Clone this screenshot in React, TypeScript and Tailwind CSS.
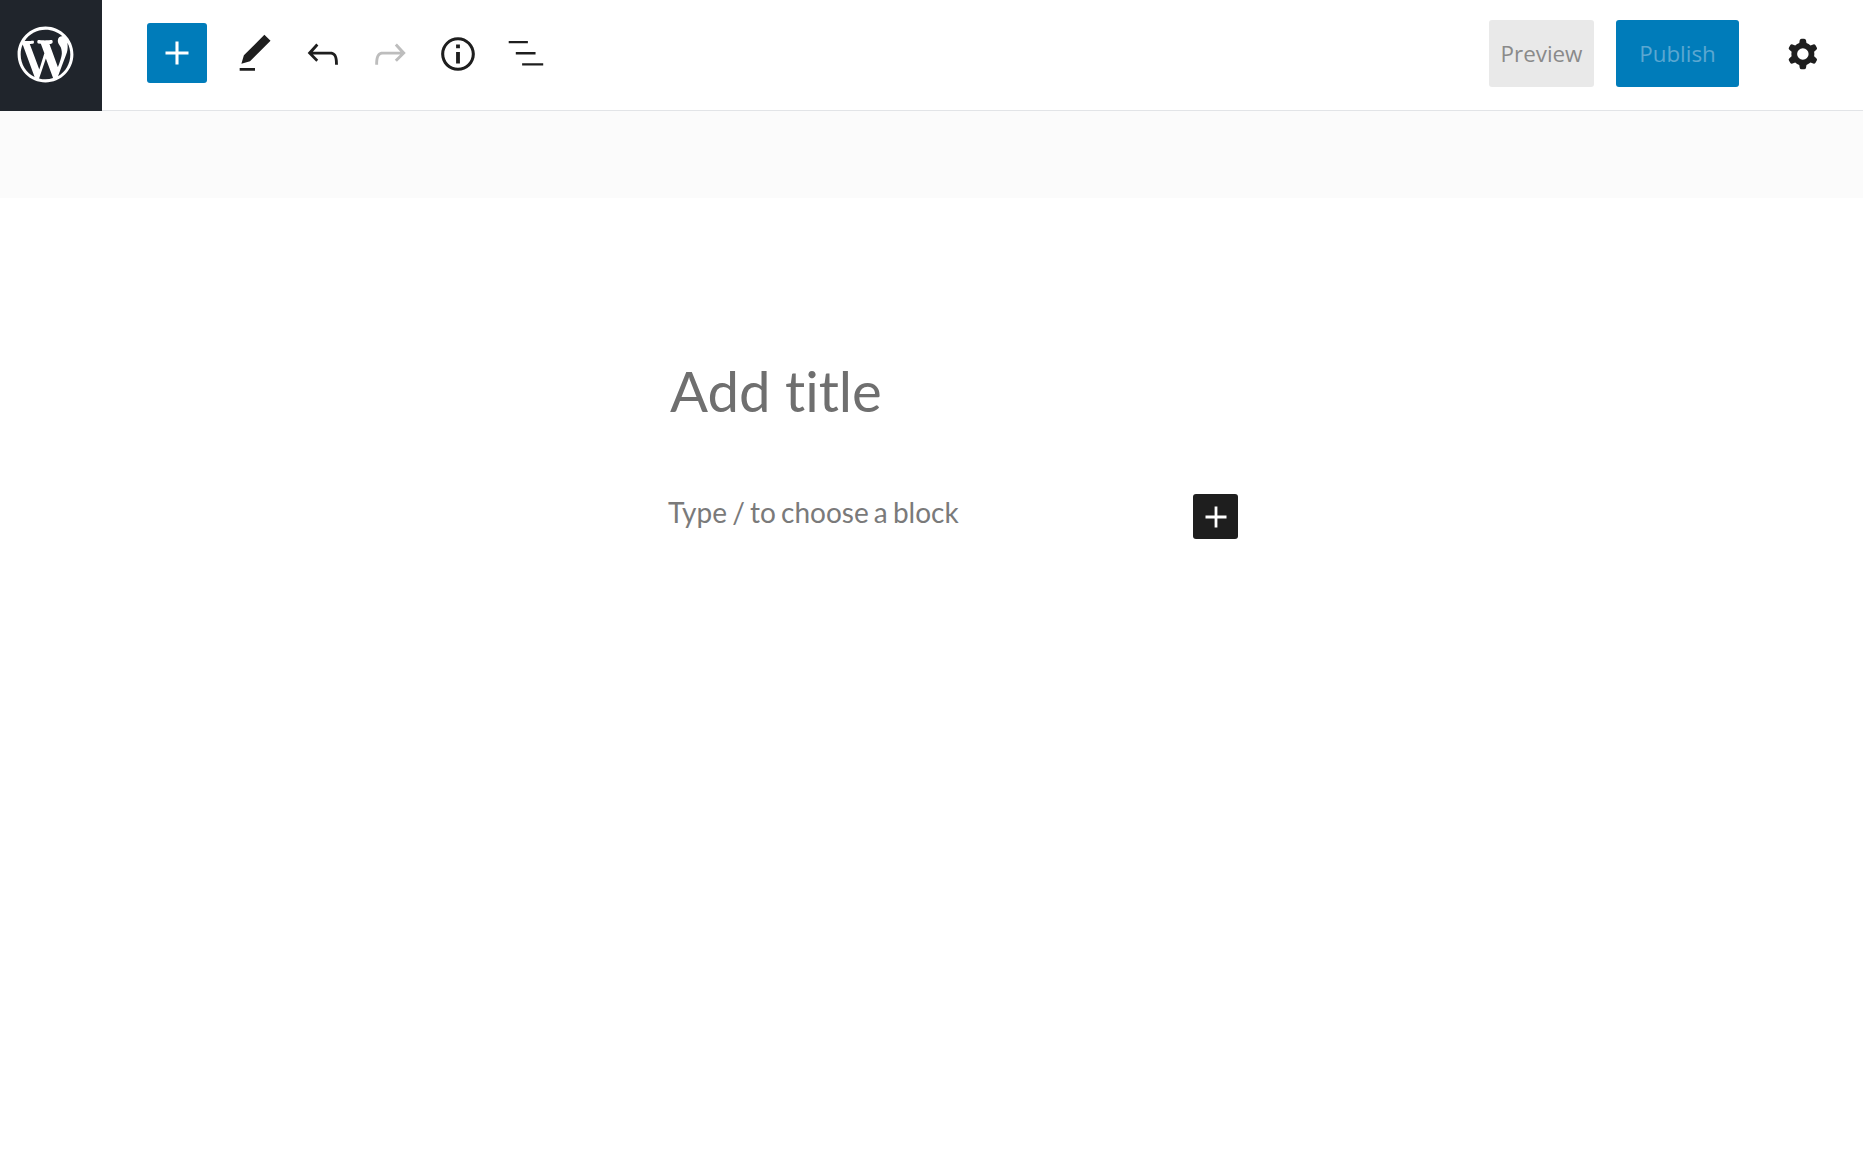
const pencil = 'M20.1 5.1L16.9 2 6.2 12.7l-1.3 4.4 4.5-1.3L20.1 5.1zM4 20.8h8v-1.5H4v1.5z';
const undo = 'M18.3 11.7c-.6-.6-1.4-.9-2.3-.9H6.7l2.9-3.3-1.1-1-4.5 5L8.5 16l1-1-2.7-2.7H16c.5 0 .9.2 1.3.5 1 1 1 3.4 1 4.5v.3h1.5v-.2c0-1.5 0-4.3-1.5-5.7z';
const redo = 'M15.6 6.5l-1.1 1 2.9 3.3H8c-.9 0-1.7.3-2.3.9-1.4 1.5-1.4 4.2-1.4 5.7v.2h1.5v-.3c0-1.1 0-3.5 1-4.5.3-.3.7-.5 1.3-.5h9.2L14.5 15l1.1 1.1 4.6-4.6-4.6-5z';
const info = 'M12 3.2c-4.8 0-8.8 3.9-8.8 8.8 0 4.8 3.9 8.8 8.8 8.8 4.8 0 8.8-3.9 8.8-8.8 0-4.8-4-8.8-8.8-8.8zm0 16c-4 0-7.2-3.3-7.2-7.2C4.8 8 8 4.8 12 4.8s7.2 3.3 7.2 7.2c0 4-3.2 7.2-7.2 7.2zM11 17h2v-6h-2v6zm0-8h2V7h-2v2z';
const listView = 'M3.5 5.2h10v1.2h-10zM7.2 11h10.3v1.2H7.2zM10.5 16.8h11v1.2h-11z';
const plus = 'M18 11.2h-5.2V6h-1.6v5.2H6v1.6h5.2V18h1.6v-5.2H18z';
const cog = 'M10.289 4.836A1 1 0 0 1 11.275 4h1.306a1 1 0 0 1 .987.836l.244 1.466c.787.26 1.503.679 2.108 1.218l1.393-.522a1 1 0 0 1 1.216.437l.653 1.13a1 1 0 0 1-.23 1.273l-1.148.944a6.025 6.025 0 0 1 0 2.435l1.149.946a1 1 0 0 1 .23 1.272l-.653 1.13a1 1 0 0 1-1.216.437l-1.394-.522c-.605.54-1.32.958-2.108 1.218l-.244 1.466a1 1 0 0 1-.987.836h-1.306a1 1 0 0 1-.986-.836l-.244-1.466a5.995 5.995 0 0 1-2.108-1.218l-1.394.522a1 1 0 0 1-1.217-.436l-.653-1.131a1 1 0 0 1 .23-1.272l1.149-.946a6.026 6.026 0 0 1 0-2.435l-1.148-.944a1 1 0 0 1-.23-1.272l.653-1.131a1 1 0 0 1 1.217-.437l1.393.522a5.994 5.994 0 0 1 2.108-1.218l.244-1.466zM14.929 12a3 3 0 1 1-6 0 3 3 0 0 1 6 0z';
const wordpress = 'M20 10c0-5.51-4.49-10-10-10C4.48 0 0 4.49 0 10c0 5.52 4.48 10 10 10 5.51 0 10-4.48 10-10zM7.78 15.37L4.37 6.22c.55-.02 1.17-.08 1.17-.08.5-.06.44-1.13-.06-1.11 0 0-1.45.11-2.37.11-.18 0-.37 0-.58-.01C4.12 2.69 6.87 1.11 10 1.11c2.33 0 4.45.87 6.05 2.34-.68-.11-1.65.39-1.65 1.58 0 .74.45 1.36.9 2.1.35.61.55 1.36.55 2.46 0 1.49-1.4 5-1.4 5l-3.03-8.37c.54-.02.82-.17.82-.17.5-.05.44-1.25-.06-1.22 0 0-1.44.12-2.38.12-.87 0-2.33-.12-2.33-.12-.5-.03-.56 1.2-.06 1.22l.92.08 1.26 3.41zM17.41 10c.24-.64.74-1.87.43-4.25.7 1.29 1.05 2.71 1.05 4.25 0 3.29-1.73 6.24-4.4 7.78.97-2.59 1.94-5.2 2.92-7.78zM6.1 18.09C3.12 16.65 1.11 13.53 1.11 10c0-1.3.23-2.48.72-3.59C3.25 10.3 4.67 14.2 6.1 18.09zm4.03-6.63l2.58 6.98c-.86.29-1.76.45-2.71.45-.79 0-1.57-.11-2.29-.33.81-2.38 1.62-4.74 2.42-7.1z';

function ToolIcon({ d, className }: { d: string; className: string }) {
  return (
    <button className={`flex h-[60px] w-[67.5px] items-center justify-center ${className}`}>
      <svg width="46" height="46" viewBox="0 0 24 24" fill="currentColor" className="ml-[1px] mt-[2px]">
        <path d={d} fillRule="evenodd" clipRule="evenodd" />
      </svg>
    </button>
  );
}

export default function App() {
  return (
    <div className="min-h-[1166px] bg-white font-['Lato',sans-serif]">
      <header className="flex h-[111px] items-center border-b border-[#e2e4e7] bg-white">
        <div className="flex h-[111px] w-[102px] shrink-0 items-center justify-center self-start bg-[#20252c] text-white">
          <svg width="67" height="67" viewBox="-2 -2 24 24" fill="currentColor" className="-ml-[11px] -mt-[2px]">
            <path d={wordpress} />
          </svg>
        </div>

        <div className="ml-[45px] mt-[-4px] flex items-center">
          <button className="mr-[14px] flex h-[60px] w-[60px] items-center justify-center rounded-[3px] bg-[#007cba] text-white">
            <svg width="46" height="46" viewBox="0 0 24 24" fill="currentColor">
              <path d={plus} />
            </svg>
          </button>
          <ToolIcon d={pencil} className="text-[#1e1e1e]" />
          <ToolIcon d={undo} className="text-[#1e1e1e]" />
          <ToolIcon d={redo} className="text-[#bdbdbd]" />
          <ToolIcon d={info} className="text-[#1e1e1e]" />
          <ToolIcon d={listView} className="text-[#1e1e1e]" />
        </div>

        <div className="ml-auto mt-[-3px] flex items-center font-['Open_Sans',sans-serif] text-[22.4px]">
          <button className="flex h-[67px] w-[105px] items-center justify-center rounded-[3px] bg-[#e9e9e9] text-[#8a8a8a]">
            Preview
          </button>
          <button className="ml-[22px] flex h-[67px] w-[123px] items-center justify-center rounded-[3px] bg-[#007cba] text-[#5ba7d1]">
            Publish
          </button>
          <button className="ml-[41px] mr-[37px] flex h-[46px] w-[46px] items-center justify-center text-[#1e1e1e]">
            <svg width="46" height="46" viewBox="0 0 24 24" fill="currentColor">
              <path d={cog} fillRule="evenodd" clipRule="evenodd" />
            </svg>
          </button>
        </div>
      </header>

      <div className="h-[87px] bg-[#fbfbfb]" />

      <main className="pl-[668px] pt-[156px]">
        <h1 className="pl-[2px] text-[56.3px] leading-[72px] font-normal text-[#6f6f6f] [font-variant-ligatures:none]">
          Add title
        </h1>
        <div className="mt-[66px] flex w-[570px] items-start justify-between">
          <p className="text-[28px] leading-[40px] text-[#7a7a7a] [word-spacing:-2px]">Type / to choose a block</p>
          <button className="mt-[2px] flex h-[45px] w-[45px] items-center justify-center rounded-[3px] bg-[#1e1e1e] text-white">
            <svg width="42" height="42" viewBox="0 0 24 24" fill="currentColor">
              <path d={plus} />
            </svg>
          </button>
        </div>
      </main>
    </div>
  );
}
